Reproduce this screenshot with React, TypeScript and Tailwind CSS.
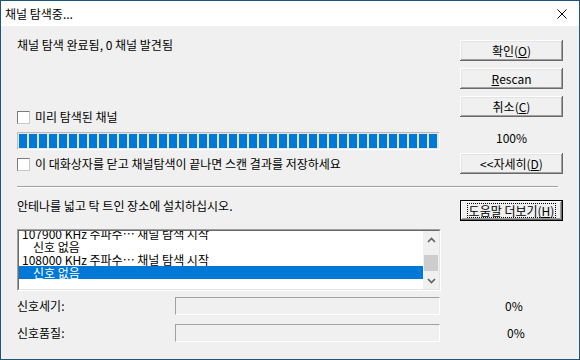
import { ReactNode } from 'react';

/* Classic Win32 look: 3D push button */
function Btn({ children, className = '' }: { children: ReactNode; className?: string }) {
  return (
    <div
      className={`h-[21px] w-[103px] flex items-center justify-center bg-[#f0f0f0] shadow-[inset_-1px_-1px_0_#696969,inset_1px_1px_0_#ffffff,inset_-2px_-2px_0_#a0a0a0,inset_2px_2px_0_#e3e3e3] ${className}`}
    >
      {children}
    </div>
  );
}

function DefaultBtn({ children, className = '' }: { children: ReactNode; className?: string }) {
  return (
    <div className={`h-[21px] w-[103px] border border-black ${className}`}>
      <div className="h-full w-full flex items-center justify-center bg-[#f0f0f0] shadow-[inset_-1px_-1px_0_#696969,inset_1px_1px_0_#ffffff,inset_-2px_-2px_0_#a0a0a0]">
        <span className="outline outline-1 outline-dotted outline-black px-[1px] leading-[13px]">{children}</span>
      </div>
    </div>
  );
}

function Check({ label, className = '' }: { label: string; className?: string }) {
  return (
    <div className={`h-[16px] flex items-center gap-[5px] ${className}`}>
      <div className="w-[13px] h-[13px] border border-t-[#7a7a7a] border-l-[#7a7a7a] border-r-[#c8c8c8] border-b-[#c8c8c8] bg-white" />
      <span>{label}</span>
    </div>
  );
}

function Chevron({ up }: { up: boolean }) {
  return (
    <svg width="9" height="6" viewBox="0 0 9 6">
      <polyline
        points={up ? '1,5 4.5,1.5 8,5' : '1,1 4.5,4.5 8,1'}
        fill="none"
        stroke="#606060"
        strokeWidth="1.6"
      />
    </svg>
  );
}

const segments = Array.from({ length: 42 });

const logLines = [
  { text: '107900 KHz 주파수… 채널 탐색 시작', indent: false, sel: false },
  { text: '신호 없음', indent: true, sel: false },
  { text: '108000 KHz 주파수… 채널 탐색 시작', indent: false, sel: false },
  { text: '신호 없음', indent: true, sel: true },
];

export default function App() {
  return (
    <div className="w-[580px] h-[360px] border border-[#1d5678] bg-[#f0f0f0] flex flex-col overflow-hidden text-[12px] leading-[16px] text-black font-['Noto_Sans_CJK_KR','Noto_Sans',sans-serif]">
      {/* Title bar */}
      <div className="h-[25px] shrink-0 bg-white flex items-center justify-between pl-[4px] pr-[12px]">
        <span>채널 탐색중...</span>
        <svg width="10" height="10" viewBox="0 0 10 10">
          <path d="M0.5 0.5 L9.5 9.5 M9.5 0.5 L0.5 9.5" stroke="#000" strokeWidth="1" />
        </svg>
      </div>

      <div className="flex-1 flex flex-col px-[16px]">
        {/* Top section */}
        <div className="flex justify-between">
          <div className="w-[423px] flex flex-col">
            <div className="mt-[11px]">채널 탐색 완료됨, 0 채널 발견됨</div>
            <Check className="mt-[56px]" label="미리 탐색된 채널" />
            <div className="mt-[7px] h-[18px] border border-t-[#bcbcbc] border-l-[#bcbcbc] border-r-white border-b-white bg-[#e6e6e6] p-[1px] overflow-hidden">
              <div className="h-full flex gap-[2px]">
                {segments.map((_, i) => (
                  <div key={i} className="w-[8px] h-full shrink-0 bg-[#0078d7]" />
                ))}
              </div>
            </div>
            <Check className="mt-[6px]" label="이 대화상자를 닫고 채널탐색이 끝나면 스캔 결과를 저장하세요" />
          </div>

          <div className="w-[103px] flex flex-col">
            <Btn className="mt-[14px]">
              확인(<u>O</u>)
            </Btn>
            <Btn className="mt-[7px]">
              <u>R</u>escan
            </Btn>
            <Btn className="mt-[7px]">
              취소(<u>C</u>)
            </Btn>
            <div className="mt-[13px] h-[16px] text-center">100%</div>
            <Btn className="mt-[7px]">
              &lt;&lt;자세히(<u>D</u>)
            </Btn>
          </div>
        </div>

        {/* Separator */}
        <div className="mt-[12px] mr-[5px] h-[2px] border-t border-t-[#a0a0a0] border-b border-b-white" />

        {/* Middle section */}
        <div className="flex justify-between">
          <div className="w-[424px] flex flex-col">
            <div className="mt-[10px]">안테나를 넓고 탁 트인 장소에 설치하십시오.</div>
            <div className="mt-[15px] h-[62px] border border-t-[#a0a0a0] border-l-[#a0a0a0] border-r-white border-b-white">
              <div className="h-full border border-t-[#696969] border-l-[#696969] border-r-[#e3e3e3] border-b-[#e3e3e3] bg-white flex">
                <div className="flex-1 overflow-hidden leading-[13px]">
                  <div className="mt-[-4px]">
                    {logLines.map((l, i) => (
                      <div
                        key={i}
                        className={`h-[13px] whitespace-nowrap ${l.indent ? 'pl-[14px]' : 'pl-[3px]'} ${l.sel ? 'bg-[#0078d7] text-white' : ''}`}
                      >
                        {l.text}
                      </div>
                    ))}
                  </div>
                </div>
                <div className="w-[16px] bg-[#f0f0f0] flex flex-col">
                  <div className="h-[17px] flex items-center justify-center">
                    <Chevron up />
                  </div>
                  <div className="h-[7px]" />
                  <div className="h-[16px] bg-[#cdcdcd] mx-[1px]" />
                  <div className="flex-1" />
                  <div className="h-[17px] flex items-center justify-center">
                    <Chevron up={false} />
                  </div>
                </div>
              </div>
            </div>
          </div>

          <div className="w-[103px] flex flex-col">
            <DefaultBtn className="mt-[12px]">
              도움말 더보기(<u>H</u>)
            </DefaultBtn>
          </div>
        </div>

        {/* Signal meters */}
        <div className="mt-[6px] h-[18px] flex items-center">
          <div className="w-[158px]">신호세기:</div>
          <div className="w-[265px] h-[18px] border border-t-[#a0a0a0] border-l-[#a0a0a0] border-r-white border-b-white" />
          <div className="ml-[65px]">0%</div>
        </div>
        <div className="mt-[9px] h-[18px] flex items-center">
          <div className="w-[158px]">신호품질:</div>
          <div className="w-[265px] h-[18px] border border-t-[#a0a0a0] border-l-[#a0a0a0] border-r-white border-b-white" />
          <div className="ml-[67px]">0%</div>
        </div>
      </div>
    </div>
  );
}
